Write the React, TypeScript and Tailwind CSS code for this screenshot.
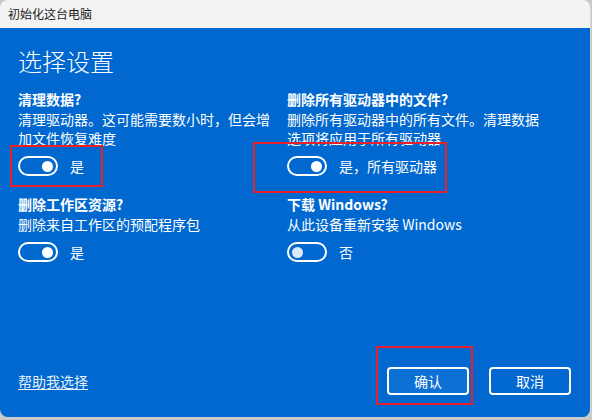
const font = { fontFamily: '"Noto Sans CJK SC", "Noto Sans", sans-serif' };

const Toggle = ({ on }: { on: boolean }) => (
  <div
    className={`w-10 h-5 rounded-full border-2 border-white flex items-center px-[3px] ${
      on ? "justify-end" : "justify-start"
    }`}
  >
    <div className={`w-[11px] h-[11px] rounded-full ${on ? "bg-white" : "bg-[#dbe9f8]"}`} />
  </div>
);

const Option = ({
  title,
  lines,
  on,
  label,
}: {
  title: string;
  lines: string[];
  on: boolean;
  label: string;
}) => (
  <div className="flex flex-col">
    <div className="text-[14px] leading-5 font-bold">{title}</div>
    <div className="mt-[1px] text-[14px] leading-[19px]">
      {lines.map((l) => (
        <div key={l}>{l}</div>
      ))}
    </div>
    <div className="mt-[8px] flex items-center gap-3 h-5">
      <Toggle on={on} />
      <span className="text-[14px]">{label}</span>
    </div>
  </div>
);

export default function App() {
  return (
    <div className="w-[592px] h-[420px] bg-[#c9c9c9]" style={font}>
      <div className="relative w-[591px] h-[417px] rounded-lg overflow-hidden flex flex-col border-r border-[#d6d6d6]">
        <div className="h-7 shrink-0 bg-[#f3f3f3] flex items-center px-2 text-[12px] text-[#1b1b1b]">
          初始化这台电脑
        </div>
        <div className="flex-1 bg-[#0068cf] text-white flex flex-col pl-[18px] pr-[19px] pb-[22px]">
          <h1 className="mt-[17px] text-[24px] leading-8 font-light">选择设置</h1>
          <div className="mt-[12px] grid grid-cols-[269px_1fr] gap-y-[18px]">
            <Option
              title="清理数据?"
              lines={["清理驱动器。这可能需要数小时，但会增", "加文件恢复难度"]}
              on
              label="是"
            />
            <Option
              title="删除所有驱动器中的文件?"
              lines={["删除所有驱动器中的所有文件。清理数据", "选项将应用于所有驱动器"]}
              on
              label="是，所有驱动器"
            />
            <Option title="删除工作区资源?" lines={["删除来自工作区的预配程序包"]} on label="是" />
            <Option title="下载 Windows?" lines={["从此设备重新安装 Windows"]} on={false} label="否" />
          </div>
          <div className="mt-auto flex items-center">
            <a className="text-[14px] underline underline-offset-2 text-[#e6f0fb]">帮助我选择</a>
            <div className="ml-auto flex gap-5">
              <button className="w-[82px] h-7 rounded border-2 border-white bg-[#0d70d4] text-[14px]">
                确认
              </button>
              <button className="w-[82px] h-7 rounded border-2 border-white text-[14px]">取消</button>
            </div>
          </div>
        </div>

        {/* annotation boxes */}
        <div className="absolute left-[10px] top-[145px] w-[93px] h-[42px] border-2 border-[#e8202a]" />
        <div className="absolute left-[253px] top-[142px] w-[194px] h-[51px] border-2 border-[#e8202a]" />
        <div className="absolute left-[376px] top-[346px] w-[97px] h-[59px] border-2 border-[#e8202a]" />
      </div>
    </div>
  );
}
